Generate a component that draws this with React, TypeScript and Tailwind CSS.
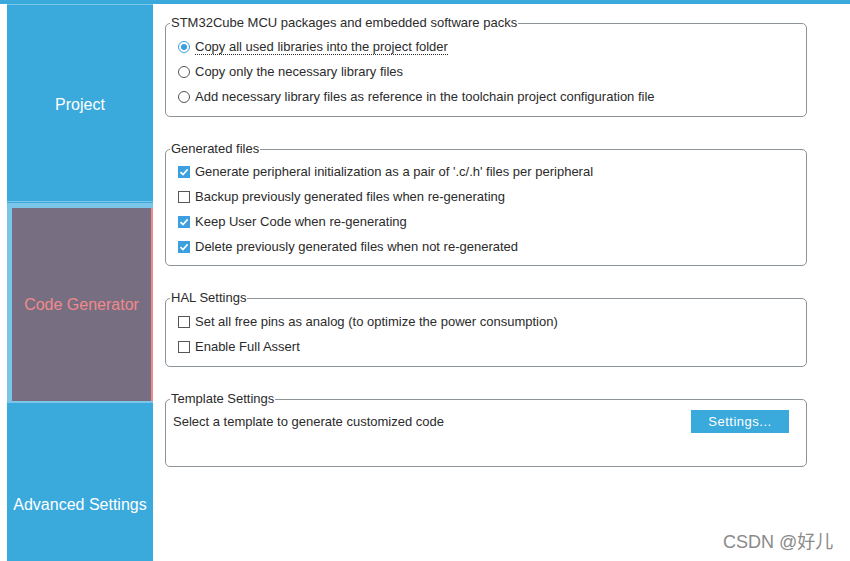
import type { ReactNode } from 'react'

const font = { fontFamily: '"Liberation Sans", Arial, sans-serif' }

function Radio({ checked }: { checked?: boolean }) {
  return (
    <span className={`w-[12px] h-[12px] rounded-full border flex items-center justify-center bg-white shrink-0
      ${checked ? 'border-[#3b9fe0]' : 'border-[#555]'}`}>
      {checked && <span className="w-[6px] h-[6px] rounded-full bg-[#3b9fe0]" />}
    </span>
  )
}

function Check({ checked }: { checked?: boolean }) {
  return checked ? (
    <span className="w-[12px] h-[12px] bg-[#3b9fe0] flex items-center justify-center shrink-0">
      <svg viewBox="0 0 12 12" className="w-[12px] h-[12px]" fill="none" stroke="white" strokeWidth={1.6}>
        <polyline points="2.5 6.2 5 8.6 9.6 3.4" />
      </svg>
    </span>
  ) : (
    <span className="w-[12px] h-[12px] border border-[#555] bg-white shrink-0" />
  )
}

function Row({ children }: { children: ReactNode }) {
  return <div className="h-[25px] flex items-center gap-[5px] pl-[12px] text-[13px] text-[#2b2b2b]">{children}</div>
}

function Legend({ children }: { children: ReactNode }) {
  return <legend className="ml-[4px] px-[1px] text-[13px] leading-[14px] text-[#2b2b2b]">{children}</legend>
}

export default function App() {
  return (
    <div className="w-[850px] h-[561px] flex flex-col bg-white relative overflow-hidden" style={font}>
      <div className="h-[4px] bg-[#3aa9dc] shrink-0" />
      <div className="flex flex-1 min-h-0">
        <div className="w-[7px] shrink-0" />
        {/* sidebar */}
        <div className="w-[146px] shrink-0 flex flex-col bg-[#3aa9dc] text-[16px]">
          <div className="h-[1px] bg-[#7ac5e8]" />
          <div className="h-[196px] flex items-center justify-center text-white pt-[4px]">Project</div>
          <div className="h-[1px] bg-[#7ac5e8]" />
          <div className="h-[1px]" />
          <div className="h-[200px] bg-[#7ac5e8] pl-[5px] pt-[5px] pb-[2px] flex">
            <div className="flex-1 bg-[#786e82] border-r-2 border-[#f08a8a] flex items-center justify-center text-[#f08a8a]">
              Code Generator
            </div>
          </div>
          <div className="flex-1 flex items-center justify-center text-white pt-[46px]">Advanced Settings</div>
        </div>
        {/* content */}
        <div className="flex-1 flex flex-col gap-[25px] pl-[12px] pt-[12px]">
          <fieldset className="w-[642px] h-[101px] border border-[#8c9399] rounded-[5px] pt-[4px]">
            <Legend>STM32Cube MCU packages and embedded software packs</Legend>
            <Row>
              <Radio checked />
              <span className="border-b border-dotted border-[#2b2b2b] leading-[15px]">Copy all used libraries into the project folder</span>
            </Row>
            <Row>
              <Radio />
              <span>Copy only the necessary library files</span>
            </Row>
            <Row>
              <Radio />
              <span>Add necessary library files as reference in the toolchain project configuration file</span>
            </Row>
          </fieldset>

          <fieldset className="w-[642px] h-[124px] border border-[#8c9399] rounded-[5px] pt-[3px]">
            <Legend>Generated files</Legend>
            <Row>
              <Check checked />
              <span>Generate peripheral initialization as a pair of '.c/.h' files per peripheral</span>
            </Row>
            <Row>
              <Check />
              <span>Backup previously generated files when re-generating</span>
            </Row>
            <Row>
              <Check checked />
              <span>Keep User Code when re-generating</span>
            </Row>
            <Row>
              <Check checked />
              <span>Delete previously generated files when not re-generated</span>
            </Row>
          </fieldset>

          <fieldset className="w-[642px] h-[76px] border border-[#8c9399] rounded-[5px] pt-[4px]">
            <Legend>HAL Settings</Legend>
            <Row>
              <Check />
              <span>Set all free pins as analog (to optimize the power consumption)</span>
            </Row>
            <Row>
              <Check />
              <span>Enable Full Assert</span>
            </Row>
          </fieldset>

          <fieldset className="w-[642px] h-[75px] border border-[#8c9399] rounded-[5px] pt-[3px]">
            <Legend>Template Settings</Legend>
            <div className="h-[25px] flex items-center justify-between pl-[7px] pr-[17px] text-[13px] text-[#2b2b2b]">
              <span>Select a template to generate customized code</span>
              <button className="w-[98px] h-[23px] bg-[#3aa9dc] text-white text-[13px] tracking-[0.5px]">Settings...</button>
            </div>
          </fieldset>
        </div>
      </div>
      <div
        className="absolute left-[723px] top-[531px] text-[18px] text-[#8a8a8a] leading-[22px]"
        style={{ fontFamily: '"Liberation Sans", "Noto Sans CJK SC", sans-serif', textShadow: '0 0 1px #fff' }}
      >
        CSDN @好儿
      </div>
    </div>
  )
}
